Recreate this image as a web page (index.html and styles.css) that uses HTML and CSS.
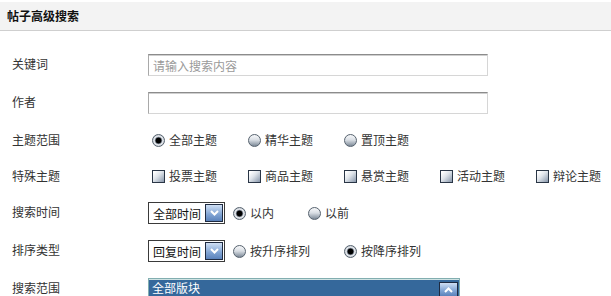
FILE: index.html
```html
<!DOCTYPE html>
<html>
    <head>
        <meta charset="UTF-8" />
        <meta name="viewport" content="width=device-width, initial-scale=1.0"/>
        <link rel="stylesheet" href="styles.css">
    </head>
    <body>
        <div class="panel">
            <div class="panel-head">帖子高级搜索</div>
            <form class="search-form">
                <div class="row row-field">
                    <label class="row-label">关键词</label>
                    <input class="text-input" type="text" placeholder="请输入搜索内容">
                </div>
                <div class="row row-field">
                    <label class="row-label">作者</label>
                    <input class="text-input" type="text">
                </div>
                <div class="row row-choice">
                    <label class="row-label">主题范围</label>
                    <label class="opt opt-wide"><input type="radio" name="scope" checked><span>全部主题</span></label>
                    <label class="opt opt-wide"><input type="radio" name="scope"><span>精华主题</span></label>
                    <label class="opt opt-wide"><input type="radio" name="scope"><span>置顶主题</span></label>
                </div>
                <div class="row row-choice">
                    <label class="row-label">特殊主题</label>
                    <label class="opt opt-wide"><input type="checkbox"><span>投票主题</span></label>
                    <label class="opt opt-wide"><input type="checkbox"><span>商品主题</span></label>
                    <label class="opt opt-wide"><input type="checkbox"><span>悬赏主题</span></label>
                    <label class="opt opt-wide"><input type="checkbox"><span>活动主题</span></label>
                    <label class="opt opt-wide"><input type="checkbox"><span>辩论主题</span></label>
                </div>
                <div class="row row-field">
                    <label class="row-label">搜索时间</label>
                    <div class="dropdown">
                        <span>全部时间</span>
                        <span class="drop-btn">
                            <svg width="9" height="6" viewBox="0 0 9 6"><polyline points="1,1 4.5,4.5 8,1" fill="none" stroke="#fff" stroke-width="2"/></svg>
                        </span>
                    </div>
                    <label class="opt"><input type="radio" name="time" checked><span>以内</span></label>
                    <label class="opt"><input type="radio" name="time"><span>以前</span></label>
                </div>
                <div class="row row-field">
                    <label class="row-label">排序类型</label>
                    <div class="dropdown">
                        <span>回复时间</span>
                        <span class="drop-btn">
                            <svg width="9" height="6" viewBox="0 0 9 6"><polyline points="1,1 4.5,4.5 8,1" fill="none" stroke="#fff" stroke-width="2"/></svg>
                        </span>
                    </div>
                    <label class="opt"><input type="radio" name="order"><span>按升序排列</span></label>
                    <label class="opt"><input type="radio" name="order" checked><span>按降序排列</span></label>
                </div>
                <div class="row row-list">
                    <label class="row-label">搜索范围</label>
                    <div class="listbox">
                        <div class="list-items">
                            <div class="list-item selected">全部版块</div>
                        </div>
                        <div class="list-scroll">
                            <span class="scroll-btn">
                                <svg width="9" height="6" viewBox="0 0 9 6"><polyline points="1,5 4.5,1.5 8,5" fill="none" stroke="#fff" stroke-width="2"/></svg>
                            </span>
                        </div>
                    </div>
                </div>
            </form>
        </div>
    </body>
</html>
```

FILE: styles.css
```css
html {
    overflow: hidden;
}
body {
    margin: 0;
    font-family: "Noto Sans CJK SC", "DejaVu Sans", sans-serif;
    font-size: 12px;
    color: #333;
    background: #fff;
}
.panel {
    margin-top: 2px;
}
.panel-head {
    height: 28px;
    line-height: 28px;
    padding-left: 7px;
    background-color: #f3f3f3;
    border-bottom: 1px solid #cfcfcf;
    font-weight: bold;
    color: #111;
}
.search-form {
    padding: 15px 0 0 12px;
}
.row {
    display: flex;
    align-items: center;
    padding: 8px 0;
}
.row-field .row-label {
    margin-top: -3px;
}
.row-choice {
    height: 20px;
}
.row-list {
    align-items: flex-start;
    padding-bottom: 0;
}
.row-label {
    width: 136px;
    line-height: 20px;
    flex-shrink: 0;
}
.text-input {
    box-sizing: border-box;
    width: 340px;
    height: 22px;
    margin: 0;
    padding: 0 4px;
    border: 1px solid;
    border-color: #8c8c8c #d6d6d6 #d6d6d6 #a9a9a9;
    box-shadow: inset 0 1px 0 #cfcfcf;
    font-family: inherit;
    font-size: 12px;
    color: #333;
    outline: none;
}
.text-input::placeholder {
    color: #9a9a9a;
}
.opt {
    display: inline-flex;
    align-items: center;
    margin-right: 30px;
    line-height: 20px;
    white-space: nowrap;
}
.opt-wide {
    width: 66px;
}
.opt input {
    appearance: none;
    -webkit-appearance: none;
    width: 13px;
    height: 13px;
    margin: 0 4px 0 4px;
    box-sizing: border-box;
    flex-shrink: 0;
}
.opt input[type="radio"] {
    border-radius: 50%;
    border: 1px solid #56626e;
    background: linear-gradient(#f7f8fa 0%, #d9dee4 45%, #7d8a98 100%);
}
.opt input[type="radio"]:checked {
    background: radial-gradient(circle, #000 0, #000 2.6px, #6b7480 3.2px, #e8ebef 4.2px, #9aa5b2 100%);
}
.opt input[type="checkbox"] {
    border: 1px solid #2a3646;
    background: linear-gradient(135deg, #ffffff 10%, #dfe4ea 45%, #8796aa 100%);
}
.dropdown {
    box-sizing: border-box;
    width: 77px;
    height: 22px;
    margin-right: 4px;
    padding: 0 1px 0 4px;
    border: 1px solid #3a3a3a;
    display: flex;
    align-items: center;
    justify-content: space-between;
    color: #111;
    background: #fff;
}
.drop-btn, .scroll-btn {
    box-sizing: border-box;
    width: 18px;
    height: 18px;
    border: 1px solid #1e2a40;
    background: linear-gradient(#cfdff4, #7fa3d3 60%, #5a82bb);
    display: flex;
    align-items: center;
    justify-content: center;
}
.listbox {
    box-sizing: border-box;
    width: 312px;
    height: 18px;
    border: 1px solid #82aeb0;
    border-bottom: none;
    box-shadow: inset 0 1px 0 #cfe3e3;
    display: flex;
    padding: 1px 1px 0;
    background-color: #35689b;
}
.list-items {
    flex: 1;
}
.list-item {
    height: 17px;
    line-height: 16px;
    padding-left: 2px;
    color: #333;
}
.list-item.selected {
    color: #fff;
}
.list-scroll {
    width: 19px;
    padding-top: 2px;
}
.scroll-btn {
    width: 19px;
    height: 15px;
}
```
